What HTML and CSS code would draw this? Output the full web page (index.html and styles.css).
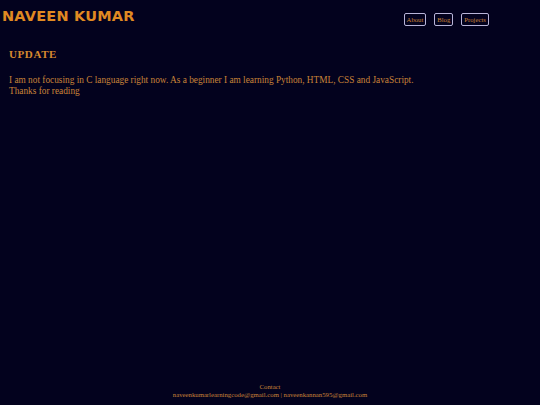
FILE: index.html
```html
<!DOCTYPE html>
<html>
<head>
<meta charset="utf-8">
<link rel="stylesheet" href="styles.css">
</head>
<body>
<header class="header">
  <h1 class="brand">NAVEEN KUMAR</h1>
  <nav class="nav">
    <a class="nav-btn" href="#">About</a>
    <a class="nav-btn" href="#">Blog</a>
    <a class="nav-btn" href="#">Projects</a>
  </nav>
</header>
<main class="content">
  <h2 class="title">UPDATE</h2>
  <p class="text">I am not focusing in C language right now. As a beginner I am learning Python, HTML, CSS and JavaScript.<br>Thanks for reading</p>
</main>
<footer class="footer">
  <div>Contact</div>
  <div>naveenkumarlearningcode@gmail.com | naveenkannan595@gmail.com</div>
</footer>
</body>
</html>
```
FILE: styles.css
```css
html, body {
  margin: 0;
  padding: 0;
  height: 100%;
}
body {
  background: #03021e;
  color: #c98338;
  font-family: "Liberation Serif", "Times New Roman", serif;
  display: flex;
  flex-direction: column;
}
.header {
  display: flex;
  align-items: flex-start;
  padding: 8px 0 0 2px;
}
.brand {
  margin: 0;
  font-family: "DejaVu Sans", Verdana, sans-serif;
  font-weight: bold;
  font-size: 14.5px;
  line-height: 17px;
  color: #e08a22;
  letter-spacing: 0.2px;
}
.nav {
  display: flex;
  gap: 8px;
  margin-left: 269px;
  margin-top: 5px;
}
.nav-btn {
  display: block;
  font-size: 6.7px;
  color: #c98338;
  text-decoration: none;
  border: 1px solid #b8b4d8;
  border-radius: 2px;
  padding: 3px 2px;
  line-height: 5px;
}
.content {
  flex: 1;
  padding: 0 9px;
}
.title {
  margin: 22px 0 0;
  font-size: 11px;
  line-height: 13px;
  font-weight: bold;
  letter-spacing: 0.6px;
  color: #d6892e;
}
.text {
  margin: 14px 0 0;
  font-size: 9.3px;
  line-height: 11px;
}
.footer {
  text-align: center;
  font-size: 6.75px;
  line-height: 8px;
  padding-bottom: 6px;
}
```
